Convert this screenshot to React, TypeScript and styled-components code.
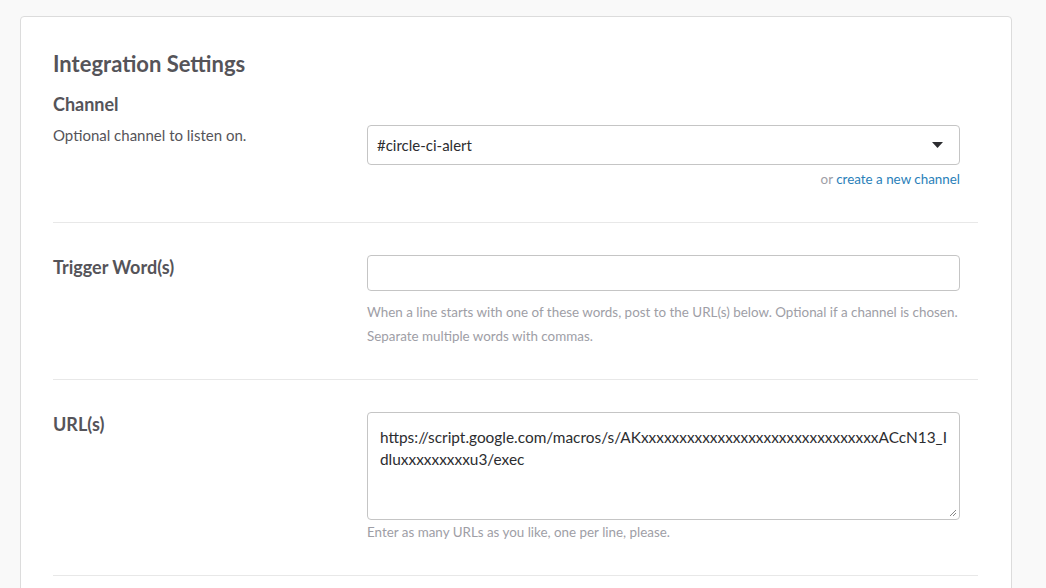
import React from "react";
import styled, { createGlobalStyle } from "styled-components";

const Global = createGlobalStyle`
  html, body { margin: 0; background: #f9f9f9; font-family: Lato, "Open Sans", sans-serif; color: #2c2d30; }
`;

const Page = styled.div`
  padding: 16px 34px 0 20px;
  height: 588px;
  overflow: hidden;
  box-sizing: border-box;
`;

const Card = styled.div`
  background: #fff;
  border: 1px solid #dcdcdc;
  border-radius: 4px;
  padding: 27px 33px 40px 32px;
  height: 700px;
`;

const Title = styled.h2`
  margin: 0;
  font-size: 22px;
  font-weight: 700;
  color: #555459;
  line-height: 40px;
`;

const Row = styled.div<{ $pt: number; $pb: number }>`
  display: grid;
  grid-template-columns: 314px 593px;
  padding: ${p => p.$pt}px 0 ${p => p.$pb}px;
  border-bottom: 1px solid #e8e8e8;
`;

const Label = styled.div<{ $mt: number }>`
  font-size: 18px;
  font-weight: 700;
  color: #555459;
  margin-top: ${p => p.$mt}px;
  line-height: 24px;
`;

const Desc = styled.div`
  font-size: 15px;
  color: #555459;
  margin-top: 9px;
  line-height: 20px;
`;

const Control = styled.div``;

const Select = styled.div`
  height: 40px;
  margin-top: 33px;
  box-sizing: border-box;
  border: 1px solid #c5c5c5;
  border-radius: 4px;
  display: flex;
  align-items: center;
  justify-content: space-between;
  padding: 0 16px 0 9px;
  font-size: 15px;
  color: #2c2d30;
`;

const Input = styled.div`
  height: 36px;
  box-sizing: border-box;
  border: 1px solid #c5c5c5;
  border-radius: 4px;
`;

const Area = styled.div`
  position: relative;
  height: 108px;
  box-sizing: border-box;
  border: 1px solid #c5c5c5;
  border-radius: 4px;
  padding: 13px 12px;
  font-size: 15.4px;
  line-height: 22px;
  color: #2c2d30;
  word-break: break-all;
`;

const Grip = styled.svg`
  position: absolute;
  right: 2px;
  bottom: 2px;
`;

const Help = styled.div<{ $right?: boolean; $mt: number }>`
  font-size: 13.4px;
  color: #9e9ea6;
  line-height: 24px;
  margin-top: ${p => p.$mt}px;
  text-align: ${p => (p.$right ? "right" : "left")};
`;

const Link = styled.span`
  color: #2a80b9;
`;

export default function App() {
  return (
    <>
      <Global />
      <Page>
        <Card>
          <Title>Integration Settings</Title>
          <Row $pt={8} $pb={31}>
            <div>
              <Label $mt={0}>Channel</Label>
              <Desc>Optional channel to listen on.</Desc>
            </div>
            <Control>
              <Select>
                #circle-ci-alert
                <svg width="11" height="6" viewBox="0 0 11 6"><path d="M0 0h11L5.5 6z" fill="#2c2d30" /></svg>
              </Select>
              <Help $right $mt={2}>
                or <Link>create a new channel</Link>
              </Help>
            </Control>
          </Row>
          <Row $pt={32} $pb={31}>
            <Label $mt={0}>Trigger Word(s)</Label>
            <Control>
              <Input />
              <Help $mt={9}>
                When a line starts with one of these words, post to the URL(s) below. Optional if a channel is chosen. Separate multiple words with commas.
              </Help>
            </Control>
          </Row>
          <Row $pt={32} $pb={31}>
            <Label $mt={0}>URL(s)</Label>
            <Control>
              <Area>
                https://script.google.com/macros/s/AKxxxxxxxxxxxxxxxxxxxxxxxxxxxxxxxACcN13_Idluxxxxxxxxxu3/exec
                <Grip width="8" height="8" viewBox="0 0 8 8"><path d="M7 1L1 7M7 4L4 7" stroke="#888" strokeWidth="1" /></Grip>
              </Area>
              <Help $mt={0}>Enter as many URLs as you like, one per line, please.</Help>
            </Control>
          </Row>
        </Card>
      </Page>
    </>
  );
}
